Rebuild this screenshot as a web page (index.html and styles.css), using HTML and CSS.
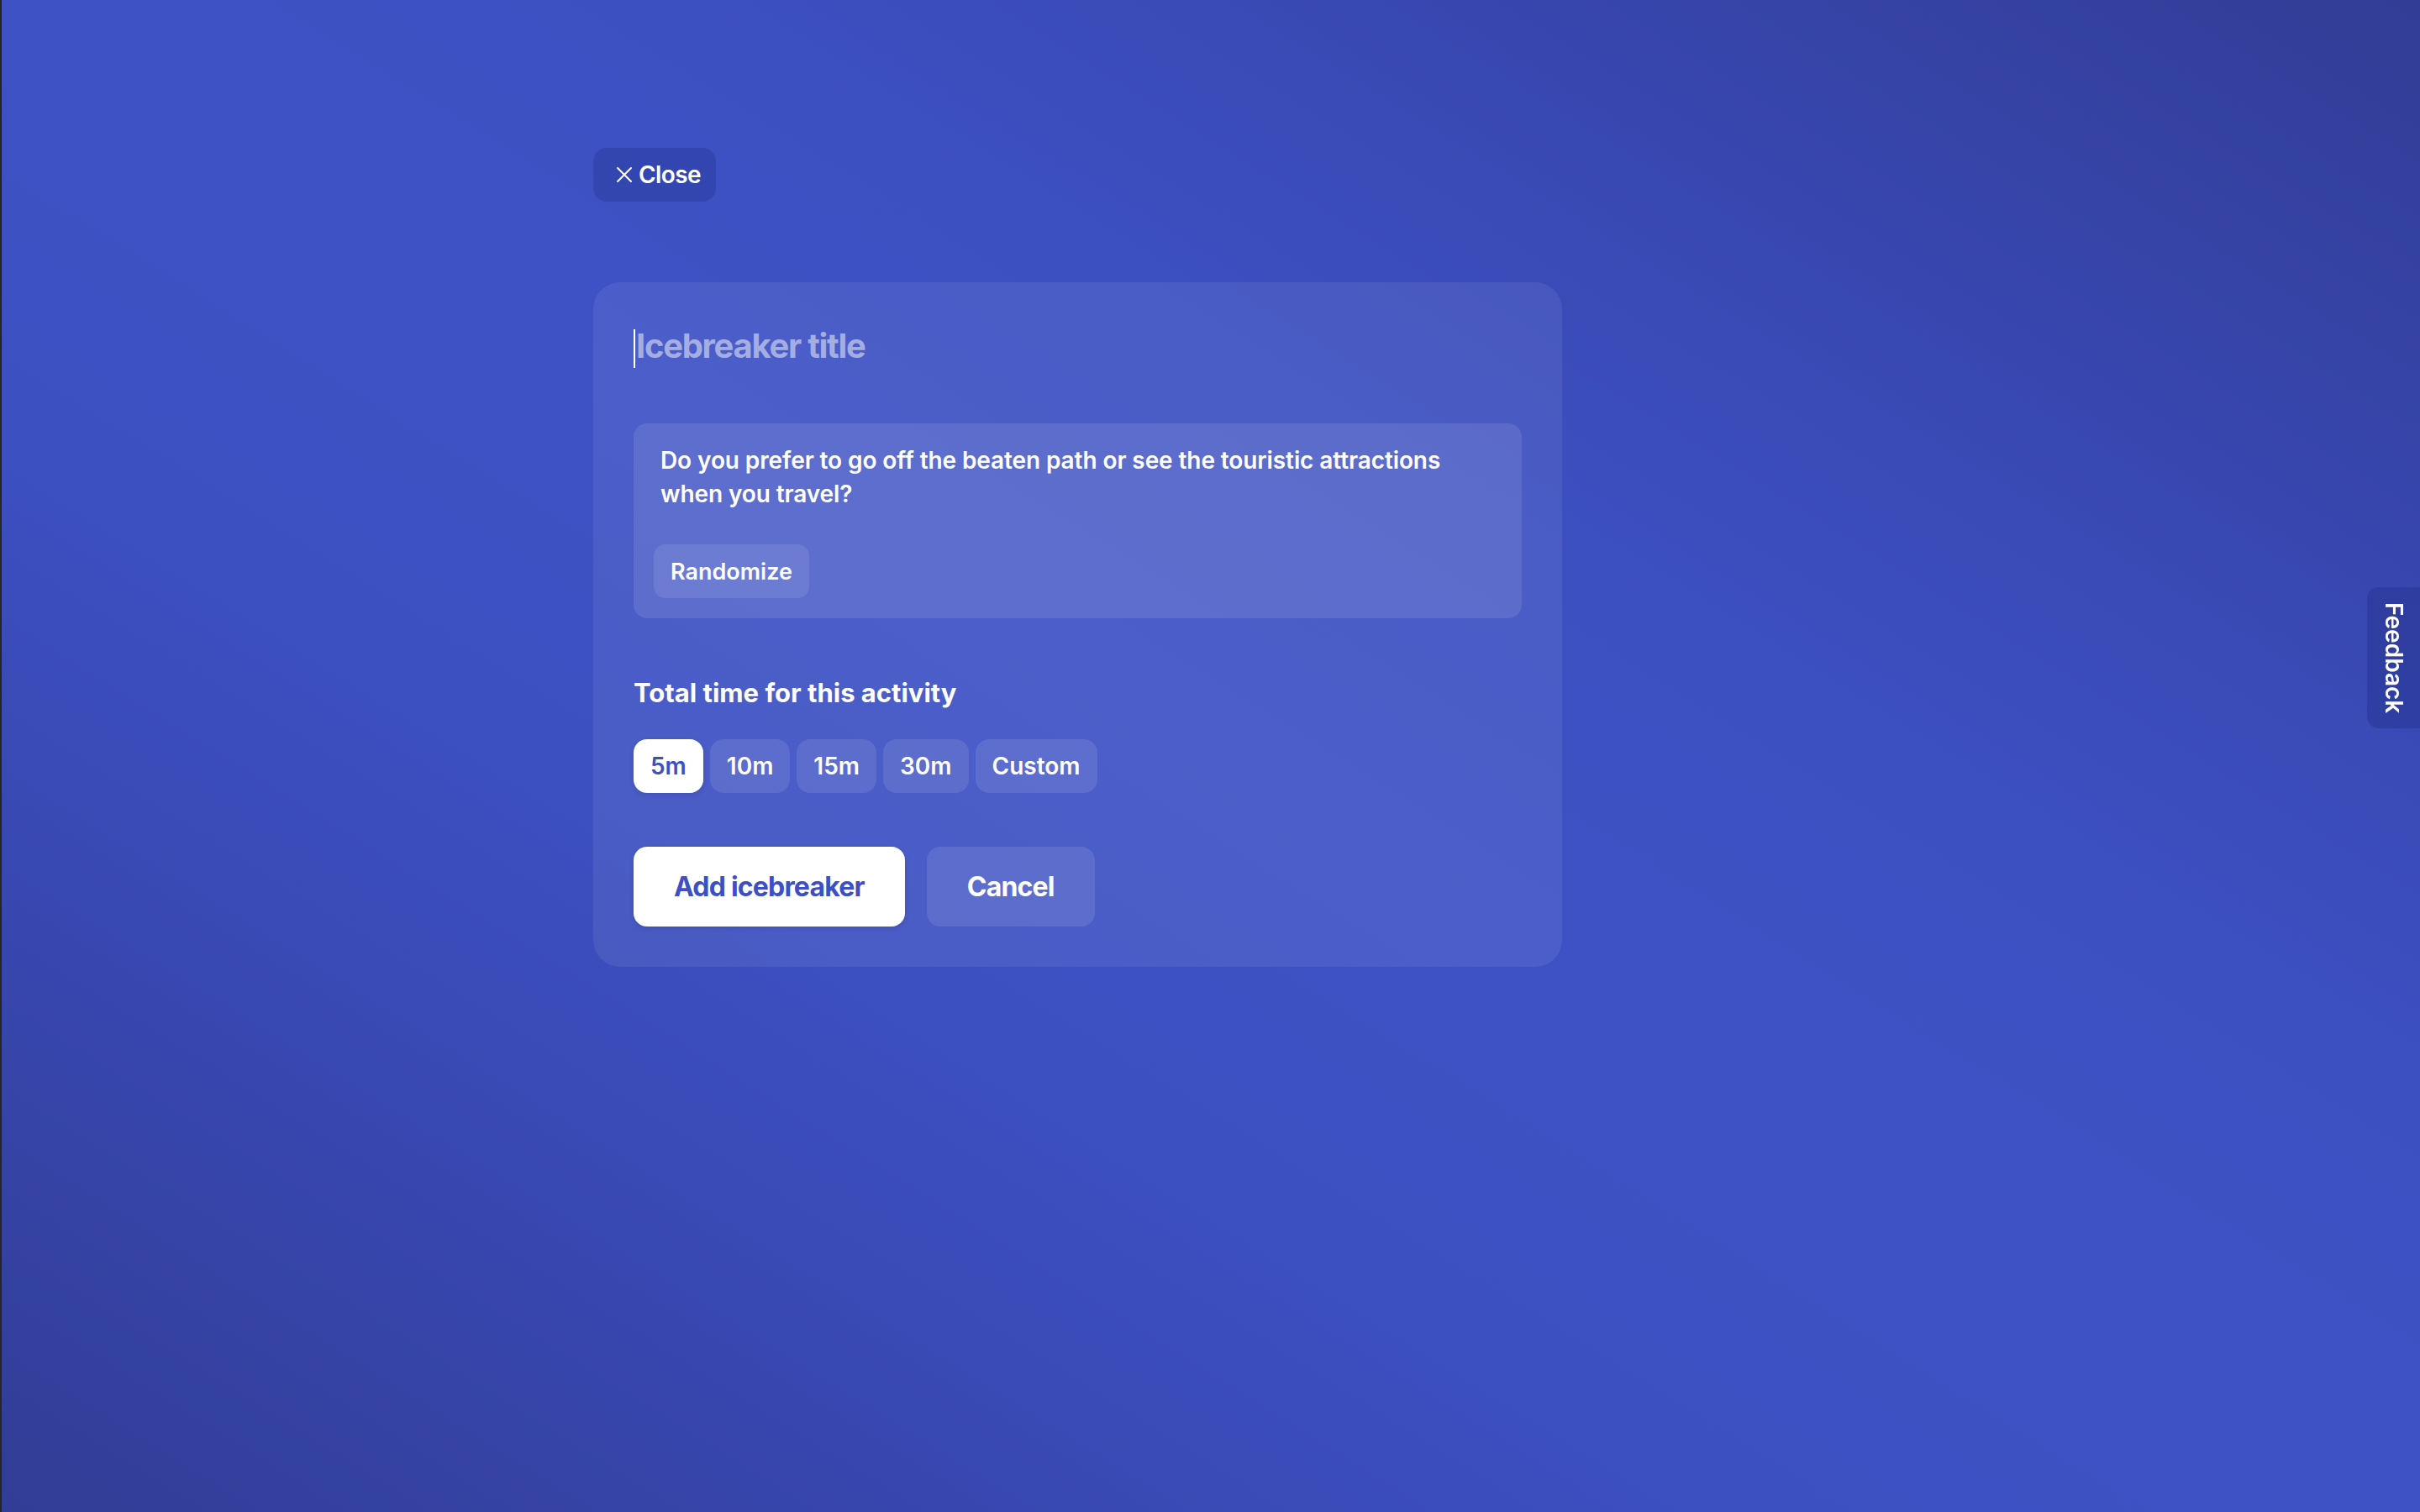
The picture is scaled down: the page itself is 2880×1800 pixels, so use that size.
FILE: index.html
```html
<!DOCTYPE html>
<html lang="en">
<head>
<meta charset="utf-8">
<title>Add icebreaker</title>
<link rel="stylesheet" href="styles.css">
</head>
<body>
<div class="page">
  <button class="close-btn" type="button">
    <svg class="close-icon" width="24" height="24" viewBox="0 0 24 24" aria-hidden="true">
      <path d="M4 4 L20 20 M20 4 L4 20" fill="none" stroke="#ffffff" stroke-width="2" stroke-linecap="round"/>
    </svg>
    <span>Close</span>
  </button>

  <section class="card">
    <div class="title-input"><span class="caret"></span><span class="placeholder">Icebreaker title</span></div>

    <div class="question">
      <p class="question-text">Do you prefer to go off the beaten path or see the touristic attractions when you travel?</p>
      <button class="randomize" type="button">Randomize</button>
    </div>

    <h3 class="label">Total time for this activity</h3>
    <div class="durations">
      <button class="chip chip-active" type="button">5m</button>
      <button class="chip" type="button">10m</button>
      <button class="chip" type="button">15m</button>
      <button class="chip" type="button">30m</button>
      <button class="chip" type="button">Custom</button>
    </div>

    <div class="actions">
      <button class="btn btn-primary" type="button">Add icebreaker</button>
      <button class="btn btn-secondary" type="button">Cancel</button>
    </div>
  </section>
</div>
<button class="feedback" type="button">Feedback</button>
</body>
</html>
```
FILE: styles.css
```css
* { box-sizing: border-box; }

html, body { height: 100%; }

body {
  margin: 0;
  min-height: 1800px;
  border-left: 2px solid #262626;
  font-family: Inter, "Noto Sans", "Liberation Sans", sans-serif;
  color: #ffffff;
  background: linear-gradient(to top right,
    #313d95 0%,
    #3847b0 20%,
    #3d50c2 36%,
    #3e52c5 50%,
    #3d50c2 64%,
    #3847b0 80%,
    #313d95 100%);
}

button {
  font-family: inherit;
  border: 0;
  cursor: pointer;
  color: inherit;
}

.page {
  padding: 176px 0 0 704px;
  display: flex;
  flex-direction: column;
  align-items: flex-start;
}

.close-btn {
  display: flex;
  align-items: center;
  gap: 5px;
  height: 64px;
  padding: 0 18px 0 25px;
  border-radius: 16px;
  background: rgba(20, 30, 110, 0.22);
  font-size: 28px;
  font-weight: 600;
  letter-spacing: -0.6px;
}

.close-icon { width: 24px; height: 24px; }

.card {
  margin-top: 96px;
  width: 1153px;
  padding: 48px;
  border-radius: 32px;
  background: rgba(255, 255, 255, 0.07);
}

.title-input {
  height: 56px;
  line-height: 56px;
  font-size: 40px;
  font-weight: 700;
  letter-spacing: -1.3px;
}

.caret {
  display: inline-block;
  width: 2px;
  height: 46px;
  margin-right: 1px;
  vertical-align: middle;
  background: #ffffff;
}

.placeholder { color: rgba(255, 255, 255, 0.5); }

.question {
  margin-top: 64px;
  padding: 24px;
  border-radius: 16px;
  background: rgba(255, 255, 255, 0.1);
  display: flex;
  flex-direction: column;
  align-items: flex-start;
  gap: 40px;
}

.question-text {
  margin: 0;
  padding: 0 8px;
  font-size: 28px;
  line-height: 40px;
  font-weight: 600;
  letter-spacing: -0.1px;
}

.randomize {
  height: 64px;
  padding: 0 20px;
  border-radius: 14px;
  background: rgba(255, 255, 255, 0.1);
  font-size: 27px;
  font-weight: 600;
}

.label {
  margin: 68px 0 0;
  font-size: 31px;
  line-height: 42px;
  font-weight: 700;
}

.durations {
  margin-top: 34px;
  display: flex;
  gap: 8px;
}

.chip {
  height: 64px;
  padding: 0 20px;
  border-radius: 16px;
  background: rgba(255, 255, 255, 0.1);
  font-size: 28px;
  font-weight: 600;
}

.chip-active {
  background: #ffffff;
  color: #3e4fc4;
  box-shadow: 0 2px 6px rgba(0, 0, 0, 0.12);
}

.actions {
  margin-top: 64px;
  display: flex;
  gap: 26px;
}

.btn {
  height: 95px;
  padding: 0 48px;
  border-radius: 16px;
  font-size: 32px;
  font-weight: 700;
  letter-spacing: -0.8px;
}

.btn-primary {
  background: #ffffff;
  color: #3e4fc4;
  box-shadow: 0 2px 6px rgba(0, 0, 0, 0.12);
}

.btn-secondary {
  background: rgba(255, 255, 255, 0.1);
}

.feedback {
  position: fixed;
  top: 699px;
  right: 0;
  width: 63px;
  height: 168px;
  border-radius: 14px 0 0 14px;
  background: rgba(20, 30, 110, 0.25);
  writing-mode: vertical-rl;
  display: flex;
  align-items: center;
  justify-content: center;
  padding: 0;
  font-size: 28px;
  font-weight: 600;
}
```
